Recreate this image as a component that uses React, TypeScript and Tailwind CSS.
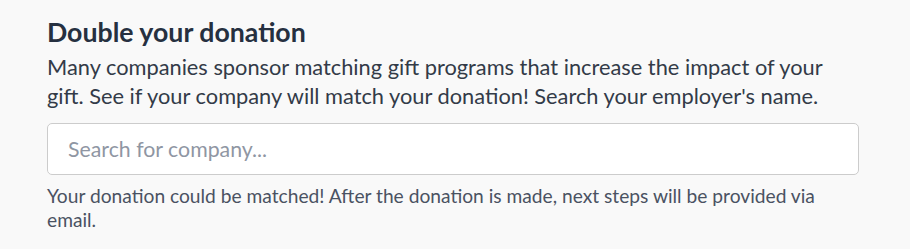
export default function App() {
  return (
    <div className="min-h-[249px] w-[910px] bg-[#f9f9f9] font-['Lato',sans-serif] text-[#2d3748]">
      <div className="pl-[47px] pr-[51px] pt-[14px]">
        <h2 className="text-[26.7px] font-bold leading-[36px] text-[#263040]">Double your donation</h2>
        <p className="mt-[2px] text-[21.8px] leading-[29px] text-[#333b48]">
          Many companies sponsor matching gift programs that increase the impact of your gift. See if your company will match your donation! Search your employer's name.
        </p>
        <input
          type="text"
          placeholder="Search for company..."
          className="mt-[13px] h-[52px] w-full rounded-[5px] border border-[#cccccc] bg-white px-[20px] text-[21.3px] text-[#333] placeholder:text-[#8f96a3] outline-none"
        />
        <p className="mt-[9px] text-[19.2px] leading-[24px] text-[#4a5262]">
          Your donation could be matched! After the donation is made, next steps will be provided via email.
        </p>
      </div>
    </div>
  )
}
